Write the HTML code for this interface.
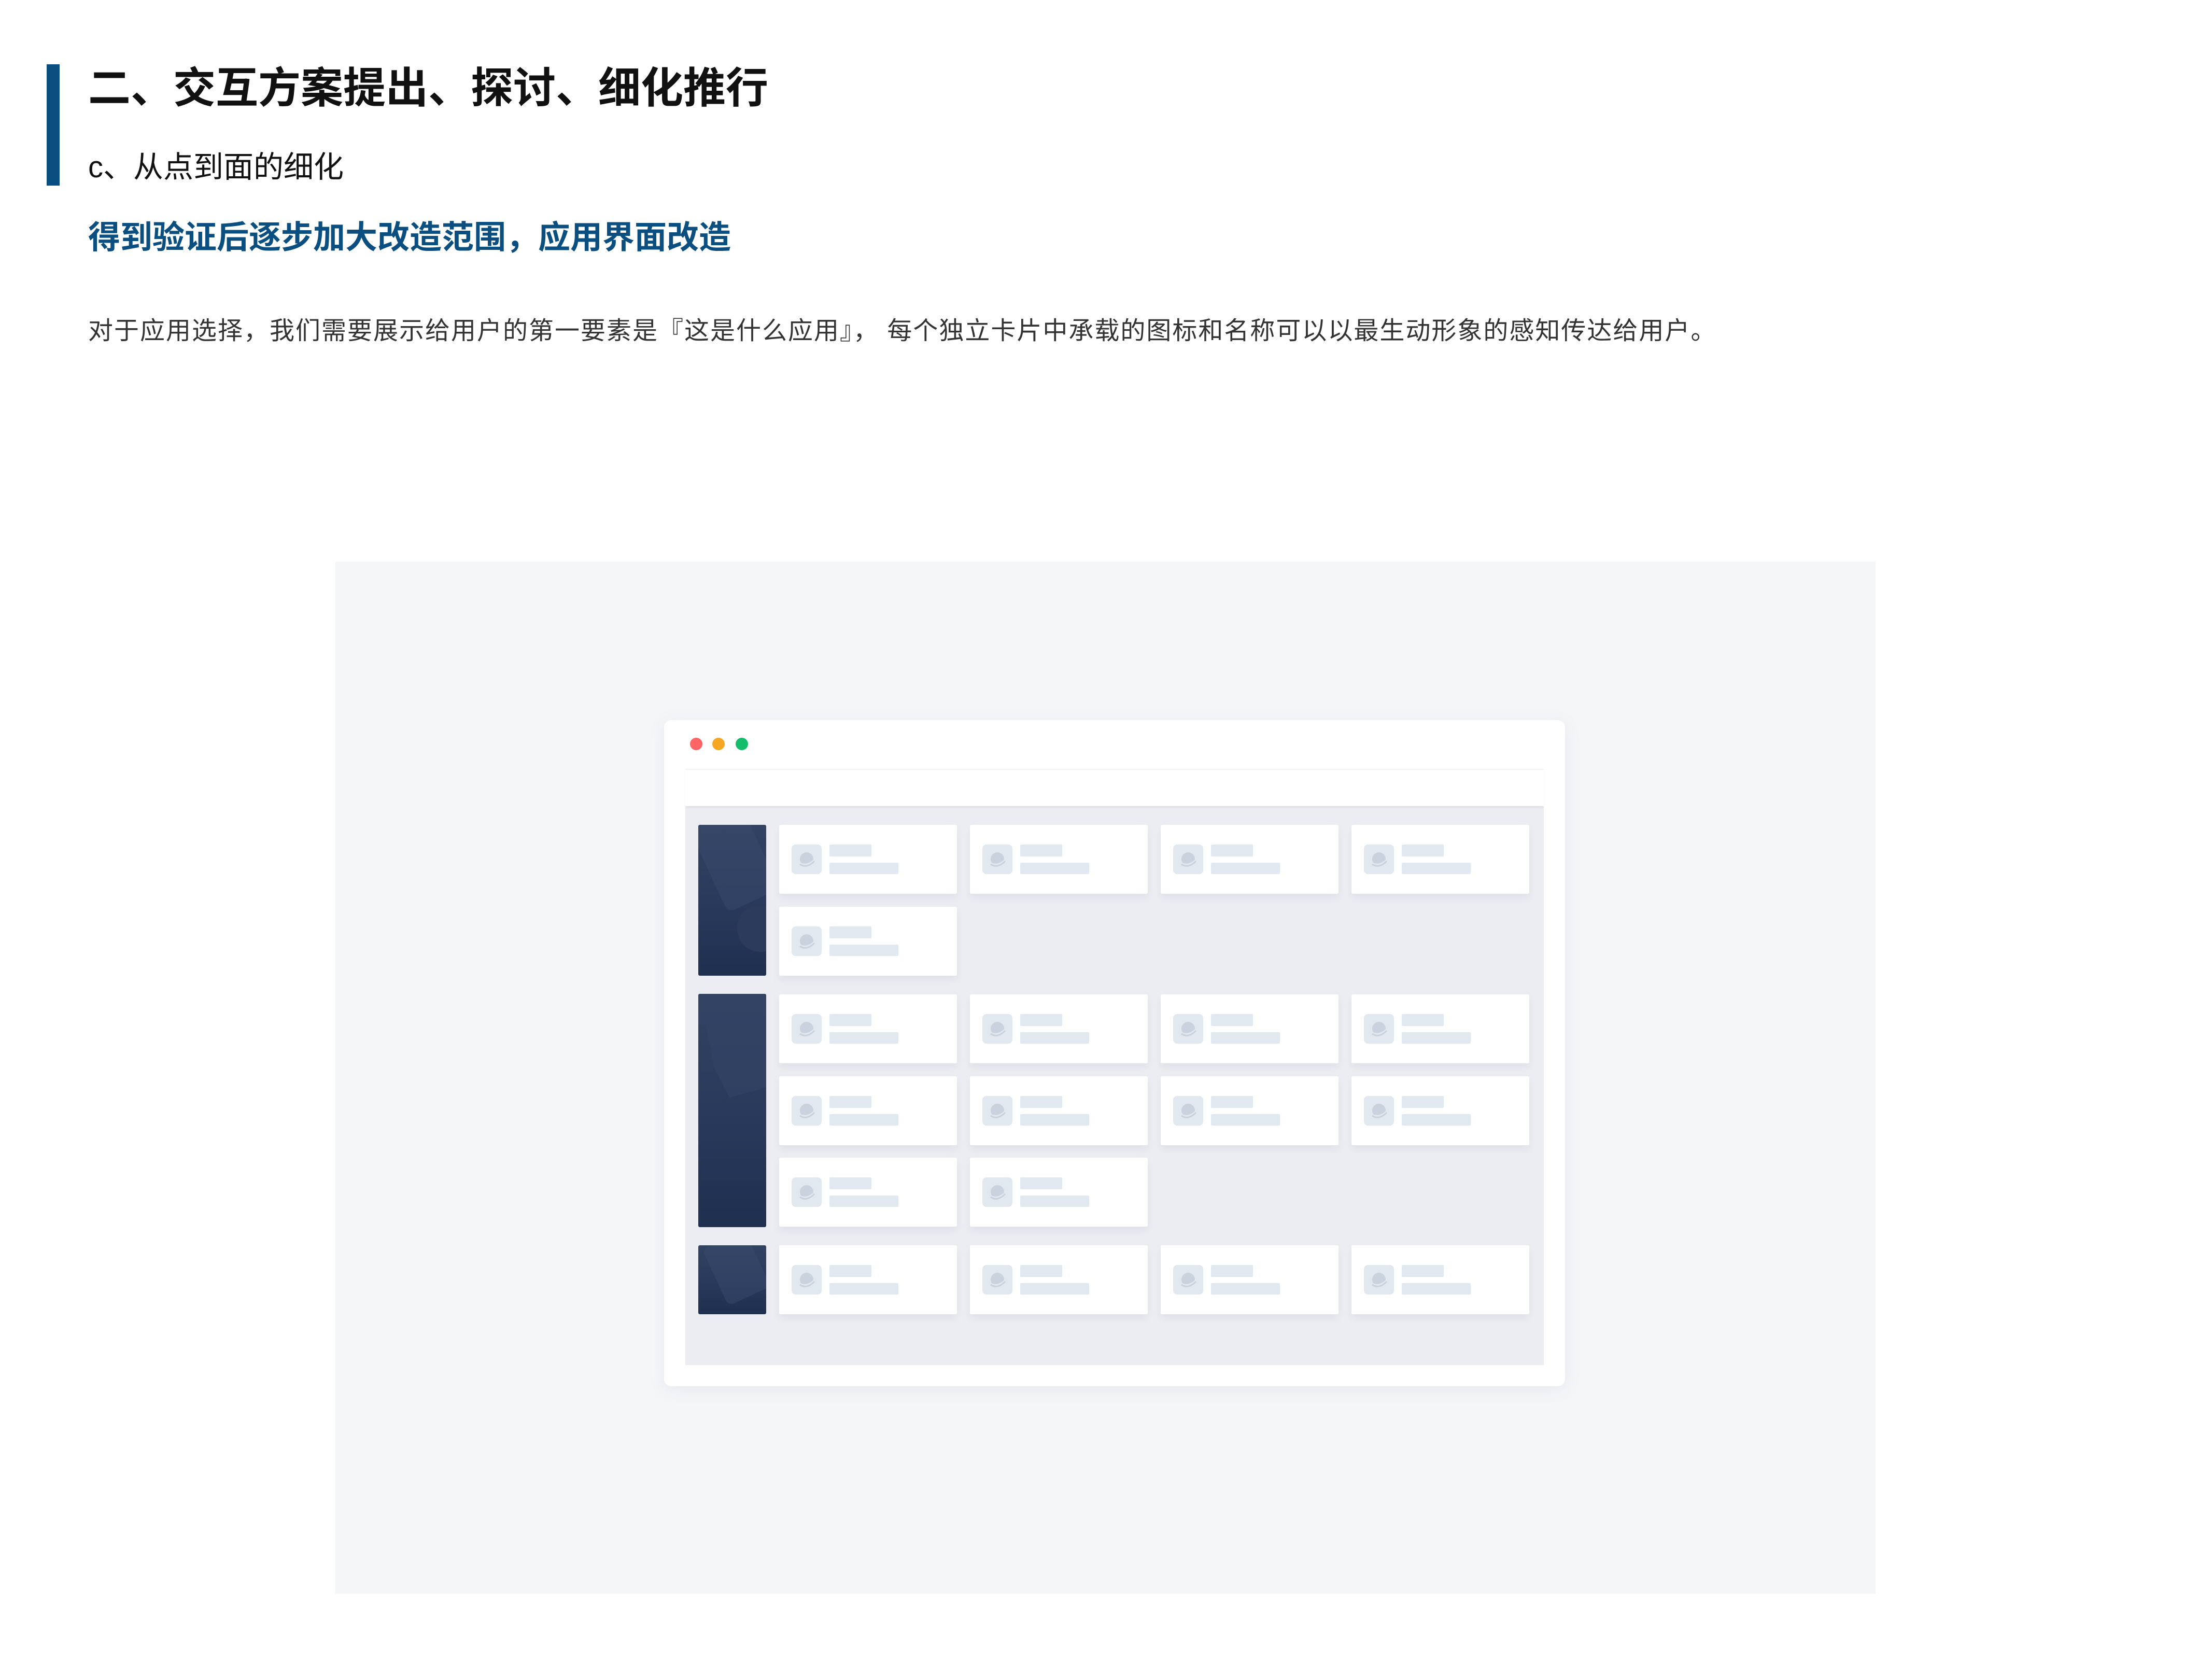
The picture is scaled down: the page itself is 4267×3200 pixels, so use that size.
<!DOCTYPE html>
<html><head><meta charset="utf-8"><style>
*{margin:0;padding:0;box-sizing:border-box}
body{width:4267px;height:3200px;background:#fff;position:relative;overflow:hidden;font-family:"Liberation Sans","Noto Sans CJK SC",sans-serif}
.t{position:absolute;white-space:nowrap;line-height:1}
.bar{position:absolute;left:90px;top:124px;width:25px;height:234px;background:#0b4f80}
.panel{position:absolute;left:647px;top:1083px;width:2971px;height:1991px;background:#f5f6f8}
.win{position:absolute;left:1281px;top:1389px;width:1738px;height:1285px;background:#fff;border-radius:14px;box-shadow:0 6px 30px rgba(120,130,150,.12)}
.dot{position:absolute;top:1423px;width:24px;height:24px;border-radius:50%}
.inner{position:absolute;left:1322px;top:1483px;width:1656px;height:1150px;background:#ecedf2}
.hdr{position:absolute;left:1322px;top:1483px;width:1656px;height:72px;background:#fff;border-top:2px solid #f2f3f5;box-shadow:0 3px 4px rgba(0,0,0,.06)}
.ban{position:absolute;left:1347px;width:131px;border-radius:3px;background:linear-gradient(180deg,#324262 0%,#2a3a5c 50%,#1f2f50 100%);overflow:hidden}
.card{position:absolute;width:343px;height:133px;background:#fff;border-radius:3px;box-shadow:0 8px 14px rgba(140,150,170,.13)}
.ic{position:absolute;left:24px;top:38px;width:58px;height:57px;background:#e1e8f0;border-radius:8px}
.ic svg{position:absolute;left:11px;top:11px}
.l1{position:absolute;left:97px;top:38px;width:81px;height:23px;background:#e1e8f0;border-radius:2px}
.l2{position:absolute;left:97px;top:73px;width:133px;height:22px;background:#e1e8f0;border-radius:2px}
</style></head><body>
<div class="bar"></div>
<div class="t" style="left:170px;top:130px;font-size:82px;font-weight:bold;color:#111">二、交互方案提出、探讨、细化推行</div>
<div class="t" style="left:170px;top:294px;font-size:58px;color:#111">c、从点到面的细化</div>
<div class="t" style="left:170px;top:428px;font-size:62px;font-weight:bold;color:#0b4f80">得到验证后逐步加大改造范围，应用界面改造</div>
<div class="t" style="left:170px;top:615px;font-size:48px;letter-spacing:2px;color:#333">对于应用选择，我们需要展示给用户的第一要素是『这是什么应用』， 每个独立卡片中承载的图标和名称可以以最生动形象的感知传达给用户。</div>

<div class="panel"></div>
<div class="win"></div>
<div class="dot" style="left:1331px;background:#ff6565"></div>
<div class="dot" style="left:1374px;background:#f5a623"></div>
<div class="dot" style="left:1419px;background:#13bd6a"></div>
<div class="inner"></div>
<div class="hdr"></div>

<div class="ban" style="top:1591px;height:291px"><svg width="131" height="291"><rect x="20" y="-20" width="110" height="180" rx="14" transform="rotate(-25 60 80)" fill="#3a4a6c" opacity=".5"/><circle cx="120" cy="200" r="45" fill="#2c3b5c"/></svg></div>
<div class="ban" style="top:1917px;height:450px"><svg width="131" height="450"><path d="M0 60 L15 60 L30 140 L60 200 L131 180 L131 0 L0 0Z" fill="#344465" opacity=".6"/></svg></div>
<div class="ban" style="top:2402px;height:133px"><svg width="131" height="133"><rect x="30" y="-10" width="90" height="120" rx="12" transform="rotate(-25 60 50)" fill="#3a4a6c" opacity=".5"/></svg></div>

<svg width="0" height="0" style="position:absolute"><defs><g id="pl"><circle cx="18" cy="17" r="13" fill="#c9d2dd"/><path d="M2 24 Q18 34 34 18" stroke="#e1e8f0" stroke-width="4" fill="none"/><path d="M5 27 Q18 36 33 21" stroke="#c9d2dd" stroke-width="3" fill="none"/></g></defs></svg>

<div class="card" style="left:1503px;top:1591px"><div class="ic"><svg width="36" height="36"><use href="#pl"/></svg></div><div class="l1"></div><div class="l2"></div></div>
<div class="card" style="left:1871px;top:1591px"><div class="ic"><svg width="36" height="36"><use href="#pl"/></svg></div><div class="l1"></div><div class="l2"></div></div>
<div class="card" style="left:2239px;top:1591px"><div class="ic"><svg width="36" height="36"><use href="#pl"/></svg></div><div class="l1"></div><div class="l2"></div></div>
<div class="card" style="left:2607px;top:1591px"><div class="ic"><svg width="36" height="36"><use href="#pl"/></svg></div><div class="l1"></div><div class="l2"></div></div>
<div class="card" style="left:1503px;top:1749px"><div class="ic"><svg width="36" height="36"><use href="#pl"/></svg></div><div class="l1"></div><div class="l2"></div></div>

<div class="card" style="left:1503px;top:1918px"><div class="ic"><svg width="36" height="36"><use href="#pl"/></svg></div><div class="l1"></div><div class="l2"></div></div>
<div class="card" style="left:1871px;top:1918px"><div class="ic"><svg width="36" height="36"><use href="#pl"/></svg></div><div class="l1"></div><div class="l2"></div></div>
<div class="card" style="left:2239px;top:1918px"><div class="ic"><svg width="36" height="36"><use href="#pl"/></svg></div><div class="l1"></div><div class="l2"></div></div>
<div class="card" style="left:2607px;top:1918px"><div class="ic"><svg width="36" height="36"><use href="#pl"/></svg></div><div class="l1"></div><div class="l2"></div></div>
<div class="card" style="left:1503px;top:2076px"><div class="ic"><svg width="36" height="36"><use href="#pl"/></svg></div><div class="l1"></div><div class="l2"></div></div>
<div class="card" style="left:1871px;top:2076px"><div class="ic"><svg width="36" height="36"><use href="#pl"/></svg></div><div class="l1"></div><div class="l2"></div></div>
<div class="card" style="left:2239px;top:2076px"><div class="ic"><svg width="36" height="36"><use href="#pl"/></svg></div><div class="l1"></div><div class="l2"></div></div>
<div class="card" style="left:2607px;top:2076px"><div class="ic"><svg width="36" height="36"><use href="#pl"/></svg></div><div class="l1"></div><div class="l2"></div></div>
<div class="card" style="left:1503px;top:2233px"><div class="ic"><svg width="36" height="36"><use href="#pl"/></svg></div><div class="l1"></div><div class="l2"></div></div>
<div class="card" style="left:1871px;top:2233px"><div class="ic"><svg width="36" height="36"><use href="#pl"/></svg></div><div class="l1"></div><div class="l2"></div></div>

<div class="card" style="left:1503px;top:2402px"><div class="ic"><svg width="36" height="36"><use href="#pl"/></svg></div><div class="l1"></div><div class="l2"></div></div>
<div class="card" style="left:1871px;top:2402px"><div class="ic"><svg width="36" height="36"><use href="#pl"/></svg></div><div class="l1"></div><div class="l2"></div></div>
<div class="card" style="left:2239px;top:2402px"><div class="ic"><svg width="36" height="36"><use href="#pl"/></svg></div><div class="l1"></div><div class="l2"></div></div>
<div class="card" style="left:2607px;top:2402px"><div class="ic"><svg width="36" height="36"><use href="#pl"/></svg></div><div class="l1"></div><div class="l2"></div></div>
</body></html>
